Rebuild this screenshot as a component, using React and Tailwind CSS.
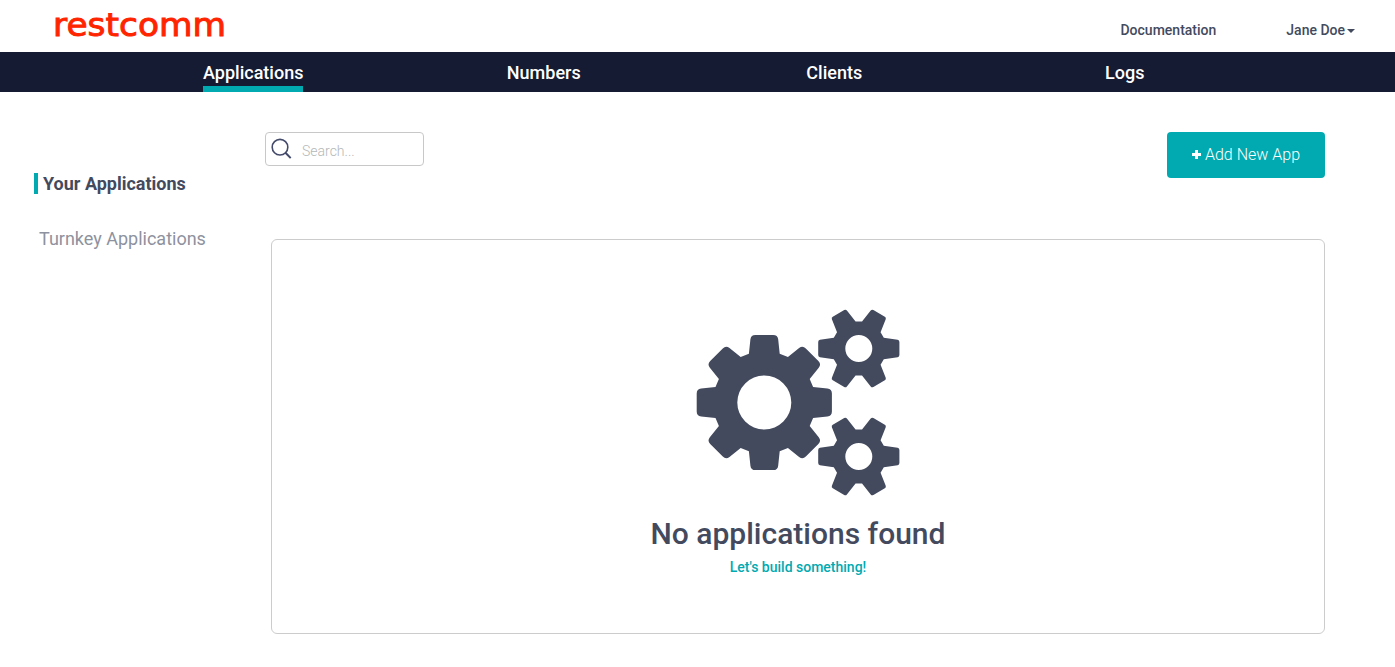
import React from "react";

// Outline of a gear: the four corners of one tooth (pointing right), repeated around the centre.
function gearPath(cx, cy, teeth, tip, half, base, baseHalf, round) {
  const corners = [
    { x: base, y: -baseHalf, r: 0 },
    { x: tip, y: -half, r: round },
    { x: tip, y: half, r: round },
    { x: base, y: baseHalf, r: 0 },
  ];
  const pts = [];
  for (let i = 0; i < teeth; i++) {
    const a = (i * 2 * Math.PI) / teeth;
    for (const c of corners) {
      pts.push({
        x: cx + c.x * Math.cos(a) - c.y * Math.sin(a),
        y: cy + c.x * Math.sin(a) + c.y * Math.cos(a),
        r: c.r,
      });
    }
  }
  const toward = (p, q, d) => {
    const len = Math.hypot(q.x - p.x, q.y - p.y);
    return `${(p.x + ((q.x - p.x) * d) / len).toFixed(2)} ${(p.y + ((q.y - p.y) * d) / len).toFixed(2)}`;
  };
  return (
    pts
      .map((p, i) => {
        const prev = pts[(i + pts.length - 1) % pts.length];
        const next = pts[(i + 1) % pts.length];
        const cmd = i === 0 ? "M" : "L";
        return `${cmd}${toward(p, prev, p.r)}Q${p.x.toFixed(2)} ${p.y.toFixed(2)} ${toward(p, next, p.r)}`;
      })
      .join("") + "Z"
  );
}

function hole(cx, cy, r) {
  return `M${cx - r} ${cy}a${r} ${r} 0 1 0 ${2 * r} 0a${r} ${r} 0 1 0 ${-2 * r} 0Z`;
}

function Gears() {
  return (
    <svg width="204" height="188" viewBox="696 309 204 188" fill="#434a5e" fillRule="evenodd" aria-hidden="true">
      <path d={gearPath(764.3, 402.5, 8, 67.6, 13.4, 48.8, 15.4, 4.5) + hole(764.3, 402.5, 27)} />
      <path d={gearPath(858.8, 348.5, 6, 40.6, 8.4, 25, 10.7, 1.8) + hole(858.8, 348.5, 13.5)} />
      <path d={gearPath(858.8, 456.5, 6, 40.6, 8.4, 25, 10.7, 1.8) + hole(858.8, 456.5, 13.5)} />
    </svg>
  );
}

function Logo() {
  return (
    <svg width="184" height="48" viewBox="0 0 184 48" className="block overflow-visible">
      <text
        x="1"
        y="35.5"
        fontSize="32"
        textLength="173"
        lengthAdjust="spacingAndGlyphs"
        fill="#ff2400"
        stroke="#ff2400"
        strokeWidth="0.9"
        fontFamily="'DejaVu Sans', sans-serif"
      >
        restcomm
      </text>
    </svg>
  );
}

const tabs = ["Applications", "Numbers", "Clients", "Logs"];

export default function App() {
  return (
    <div className="min-h-[667px] bg-white font-[Roboto,sans-serif] text-[#434a5e]">
      <header className="flex h-[52px] justify-between pl-[52px] pr-10">
        <Logo />
        <div className="flex items-start gap-[70px] pt-5 text-sm leading-5 font-medium">
          <a>Documentation</a>
          <a className="flex items-center">
            Jane Doe
            <svg className="mt-0.5 ml-0.5" width="8" height="4" viewBox="0 0 8 4" fill="currentColor">
              <path d="M0 0h8L4 4z" />
            </svg>
          </a>
        </div>
      </header>
      <nav className="grid h-10 grid-cols-4 bg-[#141b33] pr-[125px] pl-[108px] text-lg font-medium text-white">
        {tabs.map((tab, i) => (
          <div key={tab} className="flex justify-center">
            <a
              className={
                i === 0
                  ? "h-10 border-b-6 border-[#00aab0] pt-2 leading-[26px]"
                  : "h-10 pt-2 leading-[26px]"
              }
            >
              {tab}
            </a>
          </div>
        ))}
      </nav>
      <div className="flex">
        <aside className="w-[265px] shrink-0 pt-[81px] pl-[34px] text-lg">
          <div className="h-[21px] border-l-4 border-[#00aab0] pl-[5px] leading-[22px] font-bold">Your Applications</div>
          <div className="mt-[34px] pl-[5px] leading-[22px] text-[#8e929e]">Turnkey Applications</div>
        </aside>
        <main className="w-[1060px] pt-10">
          <div className="flex items-start justify-between">
            <div className="flex h-[34px] w-[159px] rounded-[4px] border border-[#c8c8c8]">
              <svg className="mt-[5px] ml-[5px]" width="21" height="21" viewBox="0 0 21 21" fill="none" stroke="#434a6a" strokeWidth="1.6">
                <circle cx="9" cy="9.2" r="7.8" />
                <path d="M14.5 14.8l5.2 5.3" strokeWidth="2" />
              </svg>
              <span className="pt-2 pl-2.5 text-sm leading-5 font-light text-[#b4b8b8]">Search...</span>
            </div>
            <button className="flex h-[46px] w-[158px] items-center justify-center gap-1 rounded-[4px] bg-[#00aab0] text-base font-light text-white">
              <svg className="-mt-px" width="9" height="9" viewBox="0 0 9 9" fill="currentColor">
                <path d="M3 0h3v3h3v3H6v3H3V6H0V3h3z" />
              </svg>
              Add New App
            </button>
          </div>
          <section className="mt-[61px] ml-1.5 flex h-[395px] flex-col items-center rounded-[6px] border border-[#ccc] pt-[69px]">
            <Gears />
            <h1 className="mt-[19px] text-[30px] leading-9 font-medium">No applications found</h1>
            <a className="mt-[5px] text-sm leading-5 font-medium text-[#00aab0]">Let's build something!</a>
          </section>
        </main>
      </div>
    </div>
  );
}
